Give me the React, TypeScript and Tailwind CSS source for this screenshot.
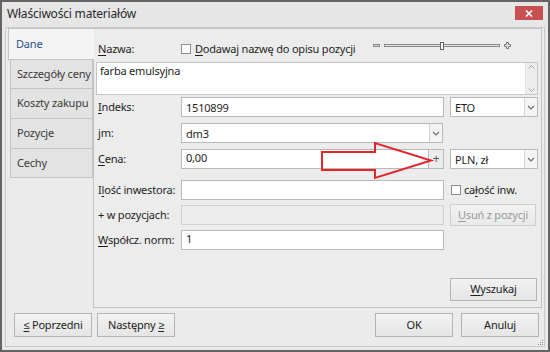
import React from "react";

const Chevron = () => (
  <svg width="8" height="5" viewBox="0 0 8 5">
    <path d="M1 1 L4 4 L7 1" fill="none" stroke="#6d6d6d" strokeWidth="1.2" />
  </svg>
);

const Select = ({ value, w }: { value: string; w: string }) => (
  <div className={`${w} h-[20px] bg-white border border-[#b9b9b9] flex items-stretch`}>
    <div className="flex-1 pl-[4px] flex items-center leading-none">{value}</div>
    <div className="w-[13px] border-l border-[#d4d4d4] bg-[#f4f4f4] flex items-center justify-center">
      <Chevron />
    </div>
  </div>
);

const Input = ({ value, w, disabled }: { value?: string; w: string; disabled?: boolean }) => (
  <div
    className={`${w} h-[20px] border ${disabled ? "bg-[#ececec] border-[#d0d0d0]" : "bg-white border-[#b9b9b9]"} pl-[4px] flex items-center leading-none`}
  >
    {value}
  </div>
);

const Btn = ({ children, w, h = "h-[24px]", cls = "" }: { children: React.ReactNode; w: string; h?: string; cls?: string }) => (
  <div
    className={`${w} ${h} border border-[#b4b4b4] bg-gradient-to-b from-[#f2f2f2] to-[#e5e5e5] flex items-center justify-center text-[#222] whitespace-nowrap ${cls}`}
  >
    {children}
  </div>
);

const Label = ({ children }: { children: React.ReactNode }) => (
  <div className="w-[87px] pl-[4px] shrink-0 text-[#1e1e1e] whitespace-nowrap">{children}</div>
);

const Tab = ({ children, h }: { children: React.ReactNode; h: string }) => (
  <div className={`ml-[2px] -mt-[1px] ${h} bg-[#e3e3e3] border border-[#c3c3c3] pl-[6px] flex items-center text-[#3a3a3a] whitespace-nowrap`}>
    {children}
  </div>
);

export default function App() {
  return (
    <div className="w-[550px] h-[352px] bg-[#e9e9e9] border-2 border-[#646464] flex flex-col font-['Noto_Sans',sans-serif] text-[11px] tracking-[-0.2px] text-[#1e1e1e] overflow-hidden">
      {/* title bar */}
      <div className="h-[25px] shrink-0 flex items-start justify-between bg-[#e6e6e6]">
        <div className="pl-[5px] pt-[1px] text-[12px] tracking-[-0.2px] leading-[22px] text-[#2a2a2a] whitespace-nowrap">Właściwości materiałów</div>
        <div className="mt-[4px] mr-[5px] w-[28px] h-[14px] bg-[#c75050] flex items-center justify-center">
          <svg width="8" height="7" viewBox="0 0 8 7">
            <path d="M1 0.5 L7 6.5 M7 0.5 L1 6.5" stroke="white" strokeWidth="1.6" />
          </svg>
        </div>
      </div>

      {/* frame */}
      <div className="relative flex-1 mx-[3px] mb-[3px] border border-[#cacaca] flex flex-col bg-[#ebebeb]">
        <div className="flex h-[280px]">
          {/* tabs */}
          <div className="w-[87px] pl-[2px] flex flex-col shrink-0">
            <div className="relative z-10 h-[32px] bg-[#f4f4f4] border border-r-0 border-[#c3c3c3] -mr-[1px] pl-[7px] flex items-center text-[#2e4f8c]">
              Dane
            </div>
            <Tab h="h-[30px]">Szczegóły ceny</Tab>
            <Tab h="h-[31px]">Koszty zakupu</Tab>
            <Tab h="h-[31px]">Pozycje</Tab>
            <Tab h="h-[30px]">Cechy</Tab>
          </div>

          {/* panel */}
          <div className="relative w-[449px] border border-[#c3c3c3] bg-[#ececec] flex flex-col">
            {/* row nazwa */}
            <div className="mt-[12px] h-[16px] flex items-center whitespace-nowrap">
              <Label>
                <u className="underline-offset-2">N</u>azwa:
              </Label>
              <div className="w-[10px] h-[10px] border border-[#8e8e8e] bg-white" />
              <div className="ml-[4px]">
                <u className="underline-offset-2">D</u>odawaj nazwę do opisu pozycji
              </div>
              <div className="ml-auto mr-[28px] -mt-[4px]">
                <svg width="140" height="10" viewBox="0 0 140 10">
                  <rect x="0.5" y="2.5" width="6" height="2" fill="#d8d8d8" stroke="#8a8a8a" />
                  <rect x="11.5" y="2.5" width="115" height="2" fill="#e2e2e2" stroke="#8a8a8a" />
                  <rect x="67.5" y="0.5" width="3" height="7" fill="#fafafa" stroke="#666" />
                  <path d="M133.5 0.5 h2 v2 h2 v2 h-2 v2 h-2 v-2 h-2 v-2 h2 z" fill="#e8e8e8" stroke="#777" />
                </svg>
              </div>
            </div>

            {/* textarea */}
            <div className="mt-[5px] ml-[2px] w-[442px] h-[33px] bg-white border border-[#c6c6c6] flex">
              <div className="flex-1 pl-[3px] leading-[15px]">farba emulsyjna</div>
              <div className="w-[12px] bg-[#ececec] border-l border-[#e0e0e0] flex flex-col justify-between items-center py-[2px]">
                <svg width="7" height="4" viewBox="0 0 7 4">
                  <path d="M0.5 3.5 L3.5 0.5 L6.5 3.5" fill="none" stroke="#a8a8a8" />
                </svg>
                <svg width="7" height="4" viewBox="0 0 7 4">
                  <path d="M0.5 0.5 L3.5 3.5 L6.5 0.5" fill="none" stroke="#a8a8a8" />
                </svg>
              </div>
            </div>

            {/* indeks */}
            <div className="mt-[2px] flex items-center">
              <Label>
                <u className="underline-offset-2">I</u>ndeks:
              </Label>
              <Input value="1510899" w="w-[263px]" />
              <div className="ml-[6px]">
                <Select value="ETO" w="w-[88px]" />
              </div>
            </div>

            {/* jm */}
            <div className="mt-[6px] flex items-center">
              <Label>
                <u className="underline-offset-2">j</u>m:
              </Label>
              <Select value="dm3" w="w-[262px]" />
            </div>

            {/* cena */}
            <div className="mt-[6px] flex items-center">
              <Label>
                <u className="underline-offset-2">C</u>ena:
              </Label>
              <div className="w-[248px] h-[20px] bg-white border border-[#b9b9b9] pl-[4px] leading-[16px]">0,00</div>
              <div className="w-[15px] h-[20px] border border-l-0 border-[#b9b9b9] bg-[#ececec] flex items-center justify-center text-[#555] text-[12px] leading-none">
                +
              </div>
              <div className="ml-[6px]">
                <Select value="PLN, zł" w="w-[88px]" />
              </div>
            </div>

            {/* ilosc */}
            <div className="mt-[11px] flex items-center">
              <Label>
                I<u className="underline-offset-2">l</u>ość inwestora:
              </Label>
              <Input w="w-[263px]" />
              <div className="ml-[7px] w-[10px] h-[10px] border border-[#8e8e8e] bg-white" />
              <div className="ml-[3px] whitespace-nowrap">
                ca<u className="underline-offset-2">ł</u>ość inw.
              </div>
            </div>

            {/* w pozycjach */}
            <div className="mt-[4px] flex items-center">
              <Label>+ w pozycjach:</Label>
              <Input w="w-[263px]" disabled />
              <div className="ml-[6px]">
                <Btn w="w-[86px]" h="h-[22px]" cls="!text-[#9a9a9a] border-[#cfcfcf] from-[#efefef] to-[#e9e9e9]">
                  <span>
                    <u className="underline-offset-2">U</u>suń z pozycji
                  </span>
                </Btn>
              </div>
            </div>

            {/* wspolcz */}
            <div className="mt-[4px] flex items-center">
              <Label>
                <u className="underline-offset-2">W</u>spółcz. norm:
              </Label>
              <div className="w-[263px] h-[20px] bg-white border border-[#b9b9b9] pl-[4px] leading-[16px]">1</div>
            </div>

            {/* wyszukaj */}
            <div className="mt-auto mb-[6px] flex justify-end pr-[4px]">
              <Btn w="w-[87px]" h="h-[23px]">
                <span>
                  <u className="underline-offset-2">W</u>yszukaj
                </span>
              </Btn>
            </div>

            {/* red arrow */}
            <svg
              className="absolute left-[225px] top-[112px]"
              width="116"
              height="40"
              viewBox="0 0 116 40"
            >
              <polygon
                points="3,11 56,11 56,2 112,19.5 56,37 56,29 3,29"
                fill="none"
                stroke="#e3262b"
                strokeWidth="2"
                strokeLinejoin="miter"
              />
            </svg>
          </div>
        </div>

        {/* bottom buttons */}
        <div className="mt-[5px] flex items-center">
          <div className="ml-[8px]">
            <Btn w="w-[78px]">
              <span>
                <u className="underline-offset-2">≤</u> Poprzedni
              </span>
            </Btn>
          </div>
          <div className="ml-[5px]">
            <Btn w="w-[78px]">
              <span>
                Następny <u className="underline-offset-2">≥</u>
              </span>
            </Btn>
          </div>
          <div className="ml-auto">
            <Btn w="w-[78px]" cls="border-[#7fb3e6]">
              OK
            </Btn>
          </div>
          <div className="ml-[8px] mr-[5px]">
            <Btn w="w-[78px]">Anuluj</Btn>
          </div>
        </div>

        {/* resize grip */}
        <svg className="absolute right-[0px] bottom-[0px]" width="7" height="7" viewBox="0 0 7 7">
          <rect x="5" y="1" width="1" height="1" fill="#8a8a8a" />
          <rect x="3" y="3" width="1" height="1" fill="#8a8a8a" />
          <rect x="5" y="3" width="1" height="1" fill="#8a8a8a" />
          <rect x="1" y="5" width="1" height="1" fill="#8a8a8a" />
          <rect x="3" y="5" width="1" height="1" fill="#8a8a8a" />
          <rect x="5" y="5" width="1" height="1" fill="#8a8a8a" />
        </svg>
      </div>
    </div>
  );
}
